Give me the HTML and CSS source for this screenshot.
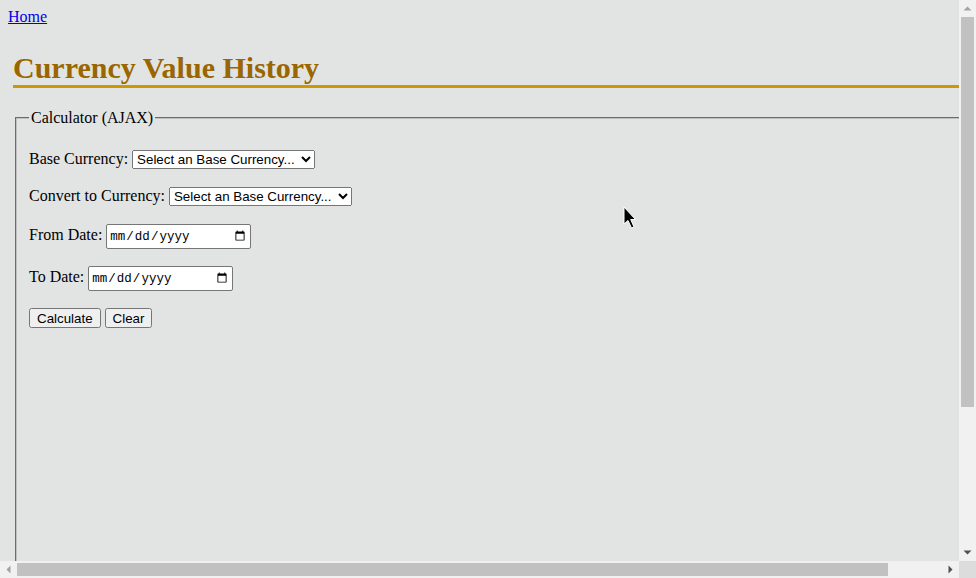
FILE: index.html
```html
<!DOCTYPE html>
<html>
<head>
<meta charset="utf-8">
<link rel="stylesheet" href="styles.css">
</head>
<body>
<div class="window">
  <div class="viewport">
    <div class="page">
      <a href="#" class="home">Home</a>
      <div class="content">
        <h1 class="title">Currency Value History</h1>
        <fieldset class="calc">
          <legend>Calculator (AJAX)</legend>
          <div class="row"><span>Base Currency:</span><select class="sel"><option>Select an Base Currency...</option></select></div>
          <div class="row"><span>Convert to Currency:</span><select class="sel"><option>Select an Base Currency...</option></select></div>
          <div class="row row-tall"><span>From Date:</span><input class="date" type="date"></div>
          <div class="row row-tall"><span>To Date:</span><input class="date" type="date"></div>
          <div class="row"><button class="btn">Calculate</button><button class="btn">Clear</button></div>
        </fieldset>
      </div>
    </div>
    <svg class="cursor" width="16" height="26" viewBox="0 0 16 26"><path d="M1 1 L1 18 L5 14.5 L8.5 22 L11 21 L7.7 13.5 L12.5 13.5 Z" fill="#000" stroke="#fff" stroke-width="1"/></svg>
  </div>
  <div class="vbar">
    <div class="arrow-btn"><svg width="17" height="17"><path d="M4.5 10.5 L8.5 6.5 L12.5 10.5 Z" fill="#a3a3a3"/></svg></div>
    <div class="vtrack"><div class="vthumb"></div></div>
    <div class="arrow-btn"><svg width="17" height="17"><path d="M4.5 6.5 L8.5 10.5 L12.5 6.5 Z" fill="#505050"/></svg></div>
  </div>
  <div class="hbar">
    <div class="arrow-btn"><svg width="17" height="17"><path d="M10.5 4.5 L6.5 8.5 L10.5 12.5 Z" fill="#a3a3a3"/></svg></div>
    <div class="htrack"><div class="hthumb"></div></div>
    <div class="arrow-btn"><svg width="17" height="17"><path d="M6.5 4.5 L10.5 8.5 L6.5 12.5 Z" fill="#505050"/></svg></div>
  </div>
  <div class="corner"></div>
</div>
</body>
</html>
```
FILE: styles.css
```css
html, body {
  margin: 0;
  padding: 0;
  overflow: hidden;
}
body {
  font-family: "Liberation Serif", "Times New Roman", serif;
  font-size: 16px;
  background: #e2e4e3;
}
.window {
  display: grid;
  grid-template-columns: 959px 17px;
  grid-template-rows: 561px 17px;
  width: 976px;
  height: 578px;
}
.viewport {
  position: relative;
  overflow: hidden;
  background: #e2e4e3;
}
.page {
  width: 1002px;
  height: 740px;
  padding: 8px;
}
.home {
  color: #0000ee;
  text-decoration: underline;
}
.content {
  margin: 0 5px;
}
.title {
  font-size: 30px;
  font-weight: bold;
  color: #996600;
  border-bottom: 3px solid #cc9900;
  margin: 25px 0 21px 0;
}
.calc {
  margin: 0 2px;
  height: 700px;
  border: 2px groove rgb(192, 192, 192);
  padding: 7px 12px 10px;
}
.row {
  display: flex;
  align-items: baseline;
  gap: 4px;
  height: 21px;
  margin: 16px 0;
}
.row-tall {
  height: 26px;
}
.sel {
  width: 183px;
  height: 19px;
  font-family: "Liberation Sans", Arial, sans-serif;
  font-size: 13.33px;
}
.date {
  box-sizing: border-box;
  width: 145px;
  height: 25px;
  padding: 1px 2px;
  font-family: "Liberation Mono", "Courier New", monospace;
  font-size: 12.5px;
  border: 1px solid #767676;
  border-radius: 2px;
  background: #fff;
}
.btn {
  font-family: "Liberation Sans", Arial, sans-serif;
  font-size: 13.33px;
  height: 20px;
}
.cursor {
  position: absolute;
  left: 623px;
  top: 206px;
}
.vbar {
  display: flex;
  flex-direction: column;
  background: #f1f1f1;
}
.hbar {
  display: flex;
  flex-direction: row;
  background: #f1f1f1;
}
.arrow-btn {
  width: 17px;
  height: 17px;
  flex: none;
}
.arrow-btn svg {
  display: block;
}
.vtrack {
  flex: 1;
  padding: 0 2px;
}
.vthumb {
  height: 390px;
  background: #c1c1c1;
}
.htrack {
  flex: 1;
  padding: 2px 0;
}
.hthumb {
  width: 871px;
  height: 13px;
  background: #c1c1c1;
}
.corner {
  background: #dcdcdc;
}
```
